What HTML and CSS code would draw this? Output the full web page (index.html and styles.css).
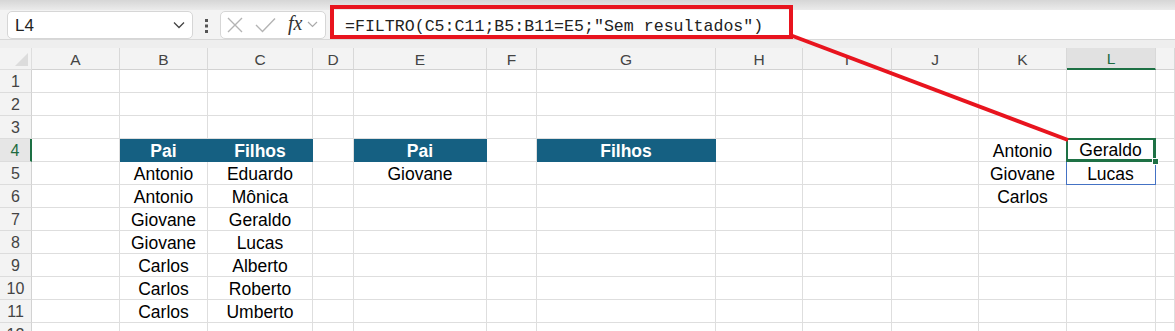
FILE: index.html
```html
<!DOCTYPE html>
<html lang="pt-BR">
<head>
    <meta charset="UTF-8">
    <meta name="viewport" content="width=device-width, initial-scale=1.0">
    <title>FILTRO</title>
    <link rel="stylesheet" href="styles.css">
</head>
<body>
    <div class="toolbar">
        <div class="top-band"></div>
        <div class="bar">
            <div class="namebox">
                <span>L4</span>
                <svg width="12" height="8" viewBox="0 0 12 8"><path d="M1 1.5 L6 6.5 L11 1.5" fill="none" stroke="#444" stroke-width="1.3"/></svg>
            </div>
            <div class="dots">
                <svg width="4" height="14" viewBox="0 0 4 14"><rect x="0" y="0" width="3" height="3" fill="#555"/><rect x="0" y="5.5" width="3" height="3" fill="#555"/><rect x="0" y="11" width="3" height="3" fill="#555"/></svg>
            </div>
            <div class="fxbox">
                <svg class="ico-x" width="16" height="16" viewBox="0 0 16 16"><path d="M1 1 L15 15 M15 1 L1 15" stroke="#b4b4b4" stroke-width="1.4" fill="none"/></svg>
                <svg class="ico-ok" width="21" height="16" viewBox="0 0 21 16"><path d="M1 8 L7.5 14.5 L20 1.5" stroke="#b4b4b4" stroke-width="1.4" fill="none"/></svg>
                <span class="fx">fx</span>
                <svg class="ico-dd" width="11" height="7" viewBox="0 0 11 7"><path d="M1 1 L5.5 5.5 L10 1" fill="none" stroke="#aaa" stroke-width="1.2"/></svg>
            </div>
            <div class="formula">=FILTRO(C5:C11;B5:B11=E5;"Sem resultados")</div>
        </div>
        <div class="band"></div>
    </div>

    <div class="sheet" id="sheet"></div>

    <!-- callout drawn over the sheet -->
    <svg class="callout" width="1175" height="331" viewBox="0 0 1175 331">
        <rect x="332" y="7" width="459" height="30" fill="none" stroke="#e8141e" stroke-width="4"/>
        <line x1="790" y1="35" x2="1068" y2="140" stroke="#e8141e" stroke-width="4"/>
    </svg>

    <script>
        const cols = ['A', 'B', 'C', 'D', 'E', 'F', 'G', 'H', 'I', 'J', 'K', 'L', 'M'];
        const rows = 12;

        const values = {
            B4: 'Pai', C4: 'Filhos', E4: 'Pai', G4: 'Filhos',
            B5: 'Antonio', C5: 'Eduardo',
            B6: 'Antonio', C6: 'Mônica',
            B7: 'Giovane', C7: 'Geraldo',
            B8: 'Giovane', C8: 'Lucas',
            B9: 'Carlos', C9: 'Alberto',
            B10: 'Carlos', C10: 'Roberto',
            B11: 'Carlos', C11: 'Umberto',
            E5: 'Giovane',
            K4: 'Antonio', K5: 'Giovane', K6: 'Carlos',
            L4: 'Geraldo', L5: 'Lucas'
        };
        const headers = ['B4', 'C4', 'E4', 'G4'];

        const sheet = document.getElementById('sheet');

        function add(cls, text) {
            const div = document.createElement('div');
            div.className = cls;
            if (text) div.textContent = text;
            sheet.appendChild(div);
            return div;
        }

        // column headers
        add('corner');
        cols.forEach(c => add(c === 'L' ? 'colhead sel' : 'colhead', c === 'M' ? '' : c));

        // rows
        for (let r = 1; r <= rows; r++) {
            add(r === 4 ? 'rowhead sel' : 'rowhead', String(r));
            cols.forEach(c => {
                const ref = c + r;
                let cls = 'cell';
                if (headers.includes(ref)) cls += ' hdr';
                if (ref === 'L4') cls += ' active';
                if (ref === 'L5') cls += ' spill';
                add(cls, values[ref] || '');
            });
        }
    </script>
</body>
</html>
```

FILE: styles.css
```css
body {
    margin: 0;
    width: 1175px;
    height: 331px;
    overflow: hidden;
    position: relative;
    background: #fff;
    font-family: "Liberation Sans", Arial, sans-serif;
}
.toolbar {
    background: #f3f3f3;
}
.top-band {
    height: 10px;
    background: linear-gradient(#d6d6d6, #ebebeb);
}
.bar {
    height: 29px;
    display: flex;
    align-items: center;
    border-bottom: 1px solid #d8d8d8;
    padding-left: 7px;
}
.namebox {
    width: 186px;
    height: 28px;
    box-sizing: border-box;
    background: #fff;
    border: 1px solid #d6d6d6;
    border-radius: 5px;
    display: flex;
    align-items: center;
    justify-content: space-between;
    padding: 3px 7px 0 7px;
    font-size: 17px;
    color: #222;
}
.namebox svg {
    margin-top: -2px;
}
.dots {
    width: 27px;
    display: flex;
    justify-content: center;
    padding-top: 2px;
}
.fxbox {
    width: 106px;
    height: 28px;
    box-sizing: border-box;
    background: #fff;
    border: 1px solid #d6d6d6;
    border-radius: 5px;
    display: flex;
    align-items: center;
    padding-left: 6px;
}
.ico-ok {
    margin-left: 12px;
}
.fx {
    font-family: "Liberation Serif", "Times New Roman", serif;
    font-style: italic;
    font-size: 20px;
    color: #333;
    margin-left: 12px;
    margin-top: -3px;
}
.ico-dd {
    margin-left: 5px;
}
.formula {
    flex: 1;
    height: 29px;
    box-sizing: border-box;
    margin-left: 5px;
    background: #fff;
    font-family: "Liberation Mono", "Courier New", monospace;
    font-size: 16.6px;
    line-height: 29px;
    padding: 2px 0 0 14px;
    color: #222;
}
.band {
    height: 8px;
    background: #eeeeee;
}
.sheet {
    display: grid;
    grid-template-columns: 32px 88px 88px 105px 41px 133px 50px 179px 87px 89px 87px 88px 89px 1fr;
    grid-template-rows: 22px;
    grid-auto-rows: 23px;
}
.sheet > div {
    box-sizing: border-box;
    border-right: 1px solid #dedede;
    border-bottom: 1px solid #dedede;
    display: flex;
    align-items: center;
    justify-content: center;
    white-space: nowrap;
    padding-top: 2px;
}
.corner {
    background: #f3f3f3;
    position: relative;
}
.corner::after {
    content: "";
    position: absolute;
    right: 3px;
    bottom: 3px;
    border-left: 13px solid transparent;
    border-bottom: 13px solid #dcdcdc;
}
.colhead {
    background: #f3f3f3;
    color: #444;
    font-size: 15.5px;
    border-right-color: #d8d8d8 !important;
    border-bottom-color: #d2d2d2 !important;
}
.rowhead {
    background: #f3f3f3;
    color: #444;
    font-size: 16px;
    border-right-color: #d2d2d2 !important;
    border-bottom-color: #dcdcdc !important;
}
.colhead.sel {
    background: #e1e1e1;
    color: #1d6b3f;
    border-bottom: 2px solid #1d7044 !important;
}
.rowhead.sel {
    background: #e6e6e6;
    color: #1d6b3f;
    border-right: 2px solid #1d7044 !important;
}
.cell {
    font-size: 17.5px;
    color: #000;
}
.cell.hdr {
    background: #156082;
    border-color: #156082;
    color: #fff;
    font-weight: bold;
}
.cell.active {
    position: relative;
    box-shadow: inset 0 0 0 2px #1e7145;
    margin: -1px 0 0 -1px;
    border-right: 1px solid #1e7145;
    border-bottom: 1px solid #1e7145;
}
.cell.active::after {
    content: "";
    position: absolute;
    right: -4px;
    bottom: -4px;
    width: 5px;
    height: 5px;
    background: #1e7145;
    border: 1px solid #fff;
}
.cell.spill {
    box-shadow: inset 1px 0 0 #4472c4;
    margin-left: -1px;
    border-right-color: #4472c4;
    border-bottom-color: #4472c4;
}
.callout {
    position: absolute;
    left: 0;
    top: 0;
    pointer-events: none;
}
```
